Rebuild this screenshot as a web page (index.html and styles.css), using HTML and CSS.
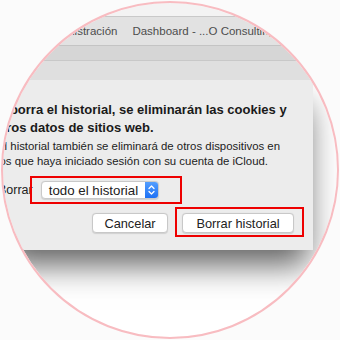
FILE: index.html
```html
<!DOCTYPE html>
<html>
<head>
<meta charset="utf-8">
<link rel="stylesheet" href="styles.css">
</head>
<body>
<div class="stage">
  <div class="screen">
    <div class="topstrip"></div>
    <div class="tabbar">
      <span class="tab tab1">Administración</span>
      <span class="tab tab2">Dashboard - ...O Consulting</span>
    </div>
    <div class="band1"></div>
    <div class="band2"></div>
    <div class="main">
      <div class="dialog">
        <div class="content">
          <p class="heading">Si borra el historial, se eliminarán las cookies y<br>otros datos de sitios web.</p>
          <p class="body">El historial también se eliminará de otros dispositivos en<br>los que haya iniciado sesión con su cuenta de iCloud.</p>
          <div class="selrow">
            <span class="label">Borrar</span>
            <div class="select">
              <span class="seltext">todo el historial</span>
              <span class="stepper">
                <svg width="13" height="18" viewBox="0 0 13 18"><path d="M4 7.5 L6.5 5 L9 7.5" fill="none" stroke="#fff" stroke-width="1.3" stroke-linecap="round" stroke-linejoin="round"/><path d="M4 10.5 L6.5 13 L9 10.5" fill="none" stroke="#fff" stroke-width="1.3" stroke-linecap="round" stroke-linejoin="round"/></svg>
              </span>
            </div>
            <div class="mark mark1"></div>
          </div>
          <div class="btnrow">
            <button class="btn">Cancelar</button>
            <button class="btn primary">Borrar historial</button>
            <div class="mark mark2"></div>
          </div>
        </div>
      </div>
    </div>
  </div>
  <div class="ring"></div>
</div>
</body>
</html>
```
FILE: styles.css
```css
html, body {
  margin: 0;
  padding: 0;
  background: #fbfbfb;
}
.stage {
  position: relative;
  width: 340px;
  height: 340px;
  background: #fbfbfb;
  overflow: hidden;
  font-family: "Liberation Sans", Arial, sans-serif;
}
.screen {
  width: 340px;
  height: 340px;
  display: flex;
  flex-direction: column;
  background: #ffffff;
  clip-path: circle(167px at 170px 170px);
}
.topstrip {
  height: 16px;
  background: #f3f3f3;
  border-bottom: 1px solid #c9c9c9;
  flex: none;
}
.tabbar {
  height: 28px;
  background: #e2e2e2;
  border-bottom: 1px solid #c4c4c4;
  display: flex;
  align-items: center;
  flex: none;
  font-size: 11.5px;
  color: #4d4d4d;
  white-space: nowrap;
}
.tab1 { margin-left: 42px; }
.tab2 { margin-left: 15px; }
.band1 {
  height: 14px;
  background: #d6d6d6;
  border-bottom: 1px solid #c8c8c8;
  flex: none;
}
.band2 {
  height: 19px;
  background: #dfdfdf;
  flex: none;
}
.main {
  flex: 1;
  overflow: hidden;
  background: #ffffff;
}
.dialog {
  width: 313px;
  height: 170px;
  background: #ececec;
  box-shadow: 0 20px 30px -5px rgba(0,0,0,0.62);
  box-sizing: border-box;
  padding: 21px 19px 0 0;
}
.content {
  margin-left: -6px;
  color: #1a1a1a;
}
.heading {
  margin: 0;
  font-size: 13px;
  font-weight: bold;
  line-height: 18px;
  white-space: nowrap;
}
.body {
  margin: 2px 0 0 3px;
  font-size: 11.4px;
  line-height: 15px;
  white-space: nowrap;
  color: #222;
}
.selrow {
  position: relative;
  display: flex;
  align-items: center;
  gap: 8px;
  margin-top: 12px;
  height: 18px;
  margin-left: 4px;
}
.label {
  font-size: 12.5px;
  color: #222;
}
.select {
  width: 118px;
  height: 18px;
  box-sizing: border-box;
  background: #fff;
  border: 1px solid #c9c9c9;
  border-radius: 4px;
  display: flex;
  align-items: center;
  justify-content: space-between;
  overflow: hidden;
  box-shadow: 0 0.5px 1px rgba(0,0,0,0.12);
}
.seltext {
  font-size: 13.3px;
  color: #222;
  margin-left: 7px;
}
.stepper {
  width: 14px;
  height: 18px;
  background: linear-gradient(#57a1ff, #1a6ef4);
  display: flex;
  align-items: center;
  justify-content: center;
  margin-right: -1px;
}
.mark {
  position: absolute;
  border: 2px solid #ee0000;
  box-sizing: border-box;
}
.mark1 {
  left: 32px;
  top: -5px;
  width: 152px;
  height: 28px;
}
.btnrow {
  position: relative;
  display: flex;
  justify-content: flex-end;
  gap: 14px;
  margin-top: 14px;
}
.btn {
  height: 20px;
  box-sizing: border-box;
  background: #fff;
  border: 1px solid #c8c8c8;
  border-radius: 4px;
  font-family: "Liberation Sans", Arial, sans-serif;
  font-size: 12.8px;
  color: #222;
  padding: 0;
  width: 76px;
  box-shadow: 0 0.5px 1px rgba(0,0,0,0.12);
}
.btn.primary { width: 112px; }
.mark2 {
  right: -10px;
  top: -6px;
  width: 129px;
  height: 30px;
}
.ring {
  position: absolute;
  left: 1px;
  top: 1px;
  width: 338px;
  height: 338px;
  box-sizing: border-box;
  border: 2.5px solid #f8bcc1;
  border-radius: 50%;
  pointer-events: none;
}
```
